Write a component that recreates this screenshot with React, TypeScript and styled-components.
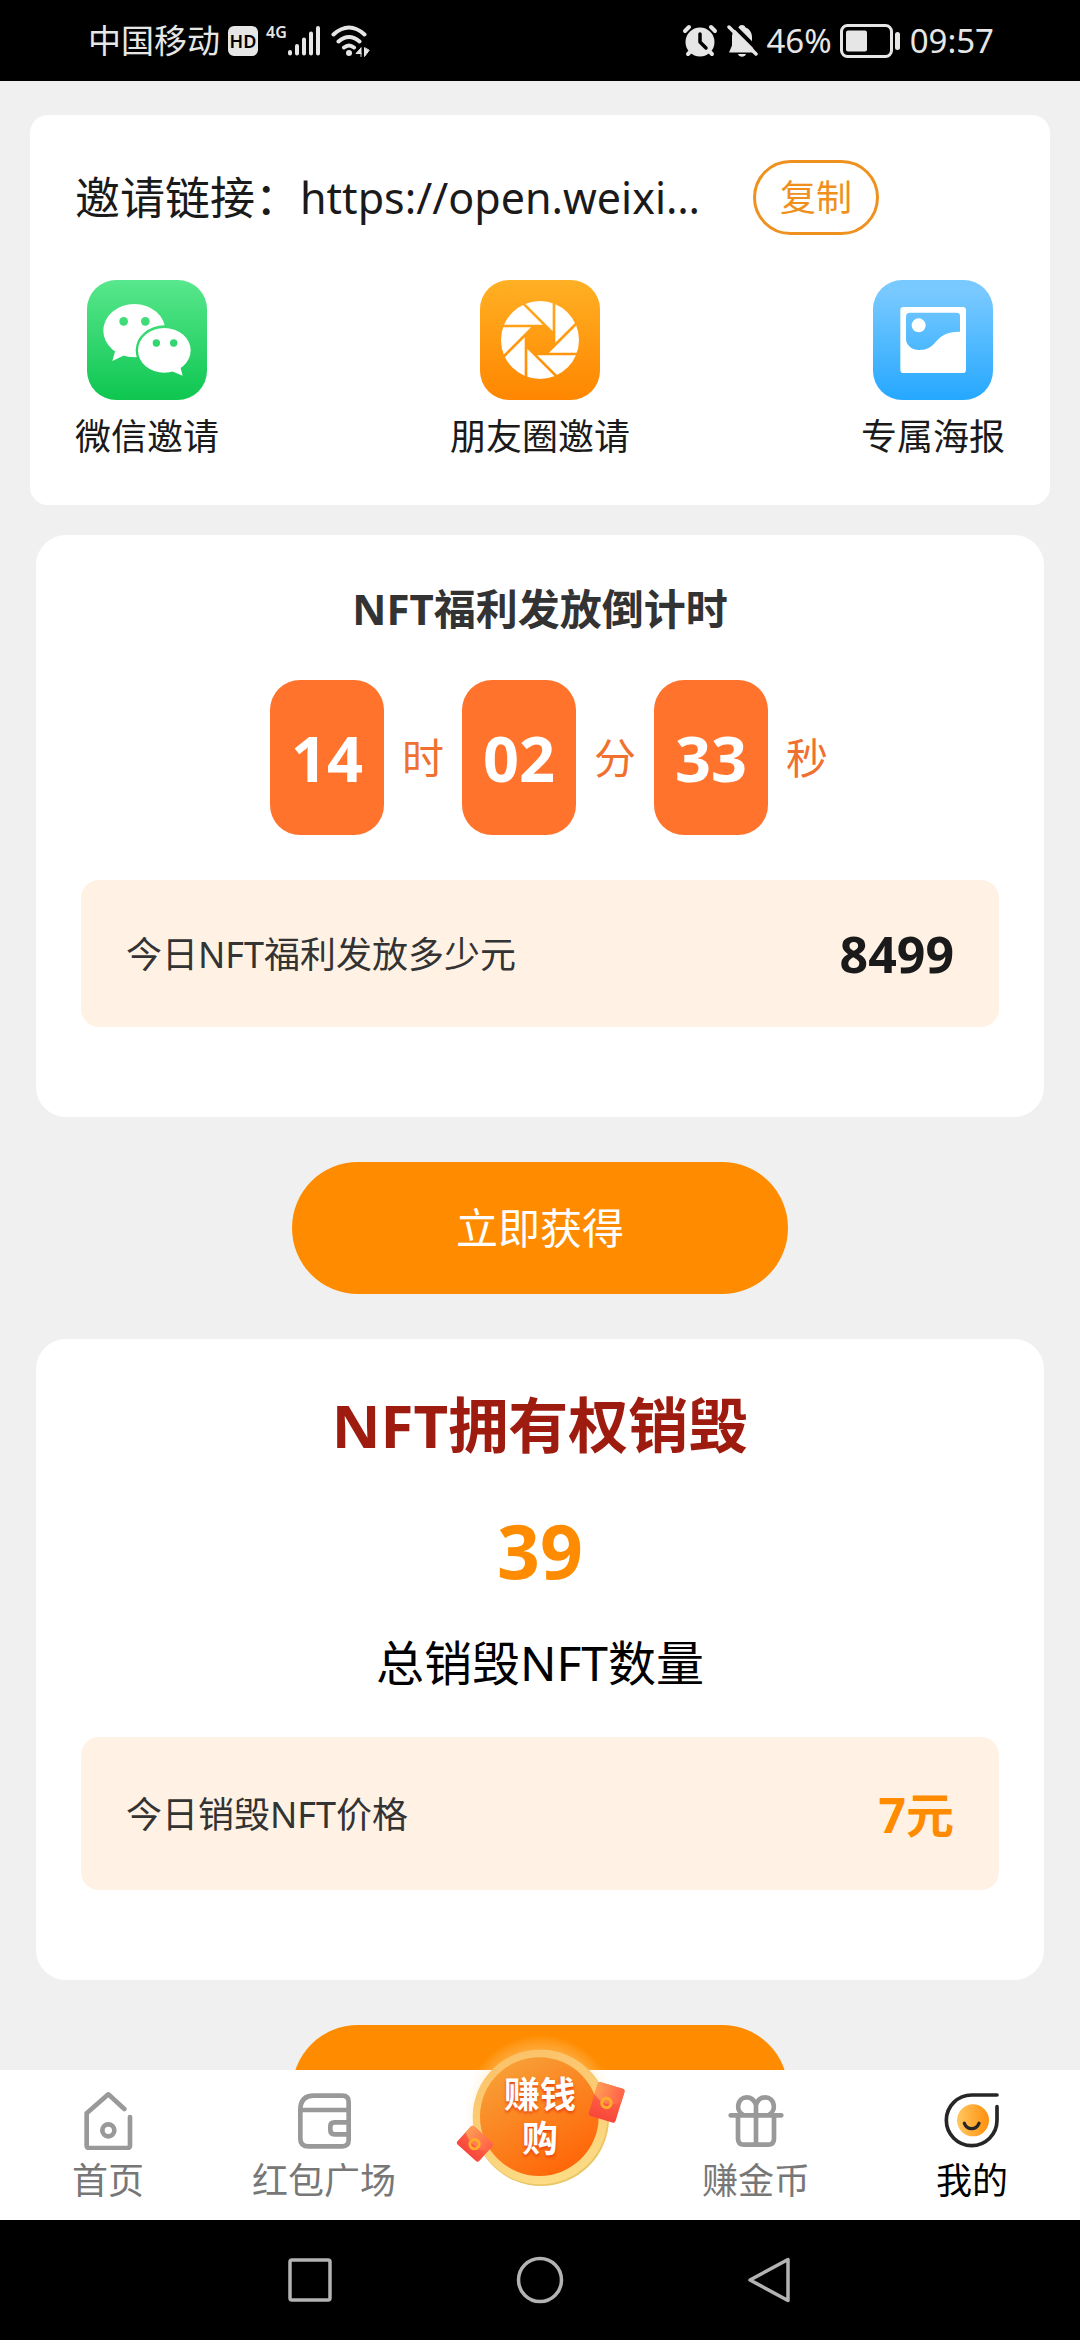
import React from "react";
import styled, { createGlobalStyle } from "styled-components";

const GlobalStyle = createGlobalStyle`
  * { box-sizing: border-box; }
  body {
    margin: 0;
    background: #f0f0f0;
    font-family: "Noto Sans", "Noto Sans CJK SC", sans-serif;
    color: #1a1a1a;
  }
  button { border: 0; padding: 0; background: none; font: inherit; color: inherit; cursor: pointer; }
  h2, p { margin: 0; }
  svg { display: block; flex: none; }
`;

const Screen = styled.div`
  display: flex;
  flex-direction: column;
  height: 100vh;
`;

/* ---------- status bar ---------- */

const StatusBar = styled.header`
  flex: none;
  display: flex;
  justify-content: space-between;
  align-items: center;
  height: 81px;
  padding: 0 86px 0 88px;
  background: #000;
  color: #e6e6e6;
  font-size: 33px;
  line-height: 48px;
`;

const StatusGroup = styled.div`
  display: flex;
  align-items: center;
  gap: 8px;
`;

const HdBadge = styled.span`
  width: 30px;
  height: 30px;
  border-radius: 6px;
  background: #e6e6e6;
  color: #000;
  font-size: 18px;
  font-weight: 600;
  line-height: 30px;
  text-align: center;
`;

const Cellular = styled.span`
  display: flex;
  align-items: flex-start;
`;

const NetworkType = styled.span`
  font-size: 16px;
  font-weight: 600;
  line-height: 16px;
`;

const Signal = () => (
  <svg width="36" height="34" viewBox="0 0 36 34" stroke="#e6e6e6" strokeWidth="4" strokeLinecap="round">
    <path d="M3 28v1.500M10 22v7.500M17 15.500v14M24 9.500v20M31 4v25.500" />
  </svg>
);

const Wifi = () => (
  <svg width="40" height="34" viewBox="0 0 40 34" fill="none" stroke="#e6e6e6" strokeWidth="4" strokeLinecap="round">
    <path d="M2.500 10.500q15.500 -14 31 0M7.500 17.500q10.500 -9 21 0M13 23.500q5 -4 10 0" />
    <circle cx="18" cy="29" r="3" fill="#e6e6e6" stroke="none" />
    <path d="M30 24v8.500M30 24l-5 5.500h5M33.500 24v8.500l4.500 -6z" fill="#e6e6e6" strokeWidth="1" />
  </svg>
);

const Alarm = () => (
  <svg width="36" height="34" viewBox="0 0 36 34">
    <g stroke="#e6e6e6" strokeWidth="4" strokeLinecap="round">
      <path d="M3 7l4 -4M33 7l-4 -4M6 30l4 -4M30 30l-4 -4" />
    </g>
    <circle cx="18" cy="18" r="14.500" fill="#e6e6e6" />
    <path d="M18 10v8l6 6" fill="none" stroke="#000" strokeWidth="3.500" strokeLinecap="round" strokeLinejoin="round" />
  </svg>
);

const MutedBell = () => (
  <svg width="32" height="34" viewBox="0 0 32 34">
    <path
      d="M16 1c2 0 3 1 3.500 2.500c5 2 6.500 6 6.500 10v8l3 7H3l3 -7v-8c0 -4 1.500 -8 6.500 -10C13 2 14 1 16 1zM12 30h8c-1 3.500 -7 3.500 -8 0z"
      fill="#e6e6e6"
    />
    <path d="M5 -1L34 28" stroke="#000" strokeWidth="4" />
    <path d="M3 3L30 30" stroke="#e6e6e6" strokeWidth="3.500" strokeLinecap="round" />
  </svg>
);

const Battery = () => (
  <svg width="62" height="34" viewBox="0 0 62 34">
    <rect x="1.500" y="1.500" width="50" height="31" rx="6" fill="none" stroke="#e6e6e6" strokeWidth="3" />
    <rect x="6" y="6.500" width="21" height="21" rx="2" fill="#e6e6e6" />
    <rect x="55" y="8" width="5" height="18" rx="2.500" fill="#e6e6e6" />
  </svg>
);

/* ---------- content ---------- */

const Content = styled.main`
  flex: 1;
  min-height: 0;
  overflow-y: auto;
  scrollbar-width: none;
  padding: 34px 36px 0;
  display: flex;
  flex-direction: column;
  align-items: stretch;
  gap: 45px;
  & > * { flex: none; }
`;

const InviteCard = styled.section`
  margin: 0 -6px -15px;
  padding: 45px 45px 41px;
  border-radius: 18px;
  background: #fff;
`;

const InviteRow = styled.div`
  display: flex;
  align-items: center;
  margin-bottom: 45px;
  font-size: 45px;
  line-height: 60px;
  white-space: nowrap;
`;

const InviteUrl = styled.span`
  width: 408px;
  margin-right: 45px;
  font-size: 43px;
`;

const CopyButton = styled.button`
  width: 126px;
  height: 75px;
  border: 3px solid #ef911f;
  border-radius: 38px;
  color: #f0901c;
  font-size: 36px;
  line-height: 54px;
`;

const ShareRow = styled.div`
  display: flex;
  justify-content: space-between;
`;

const ShareButton = styled.button`
  display: flex;
  flex-direction: column;
  align-items: center;
  gap: 10px;
  font-size: 36px;
  line-height: 54px;
`;

const Card = styled.section`
  padding: 45px 45px 90px;
  border-radius: 30px;
  background: #fff;
  text-align: center;
`;

const CountTitle = styled.h2`
  margin-bottom: 42px;
  color: #333;
  font-size: 42px;
  font-weight: 700;
  line-height: 58px;
`;

const Countdown = styled.div`
  display: flex;
  justify-content: center;
  align-items: center;
  gap: 18px;
  margin-bottom: 45px;
  padding-left: 18px;
`;

const TimeTile = styled.span`
  width: 114px;
  border-radius: 30px;
  background: #ff732c;
  color: #fff;
  font-size: 63px;
  font-weight: 700;
  line-height: 155px;
`;

const TimeUnit = styled.span`
  width: 42px;
  color: #f0712f;
  font-size: 42px;
  line-height: 60px;
`;

const InfoBox = styled.div<{ $tall?: boolean }>`
  display: flex;
  justify-content: space-between;
  align-items: center;
  padding: 46px 45px 44px;
  border-radius: 18px;
  background: #fff2e4;
  color: #333;
  font-size: 36px;
  line-height: ${(p) => (p.$tall ? 63 : 57)}px;
`;

const InfoValue = styled.strong<{ $accent?: boolean }>`
  color: ${(p) => (p.$accent ? "#ff8c00" : "#1a1a1a")};
  font-size: ${(p) => (p.$accent ? 48 : 50)}px;
  font-weight: 700;
`;

const PrimaryButton = styled.button`
  align-self: center;
  width: 496px;
  height: 132px;
  border-radius: 66px;
  background: #ff8c00;
  color: #fff;
  font-size: 42px;
  line-height: 60px;
`;

const BurnTitle = styled.h2`
  margin-bottom: 36px;
  color: #9e1b0f;
  font-size: 60px;
  font-weight: 700;
  line-height: 82px;
`;

const BurnCount = styled.p`
  margin-bottom: 32px;
  color: #ff8c00;
  font-size: 75px;
  font-weight: 700;
  line-height: 96px;
`;

const BurnCaption = styled.p`
  margin-bottom: 41px;
  color: #000;
  font-size: 48px;
  line-height: 66px;
`;

/* ---------- tab bar ---------- */

const TabBar = styled.nav`
  position: relative;
  z-index: 1;
  flex: none;
  display: grid;
  grid-template-columns: repeat(5, 1fr);
  height: 150px;
  background: #fff;
`;

const Tab = styled.button<{ $active?: boolean }>`
  display: flex;
  flex-direction: column;
  align-items: center;
  gap: 4px;
  padding-top: 20px;
  color: ${(p) => (p.$active ? "#000" : "#777")};
  font-size: 36px;
  line-height: 54px;
`;

const MedalTab = styled.button`
  position: relative;
`;

const MedalArt = styled.svg`
  position: absolute;
  top: -50px;
  left: 50%;
  margin-left: -110px;
`;

const MedalText = styled.span`
  position: absolute;
  top: 3px;
  left: 0;
  right: 0;
  display: flex;
  flex-direction: column;
  color: #fff;
  font-size: 36px;
  font-weight: 700;
  line-height: 44px;
  text-shadow: 0 2px 3px #e8420c;
`;

/* ---------- system bar ---------- */

const SystemBar = styled.footer`
  flex: none;
  display: flex;
  justify-content: center;
  align-items: center;
  gap: 182px;
  height: 120px;
  background: #000;
`;

const SystemKey = ({ label, children }: { label: string; children: React.ReactNode }) => (
  <button aria-label={label}>
    <svg width="48" height="48" viewBox="0 0 48 48" fill="none" stroke="#b3b3b3" strokeWidth="3.500" strokeLinejoin="round">
      {children}
    </svg>
  </button>
);

/* ---------- drawings ---------- */

const WeChatIcon = () => (
  <svg width="120" height="120" viewBox="0 0 360 360">
    <defs>
      <linearGradient id="wx" x1="0" y1="0" x2="0" y2="1">
        <stop offset="0" stopColor="#58e78d" />
        <stop offset="1" stopColor="#0ec650" />
      </linearGradient>
      <mask id="wxBack">
        <rect width="360" height="360" fill="#fff" />
        <circle cx="110" cy="124" r="13" />
        <circle cx="175" cy="124" r="13" />
        <ellipse cx="232" cy="211" rx="86" ry="75" />
      </mask>
      <mask id="wxFront">
        <rect width="360" height="360" fill="#fff" />
        <circle cx="208" cy="189" r="11" />
        <circle cx="260" cy="189" r="11" />
      </mask>
    </defs>
    <rect width="360" height="360" rx="88" fill="url(#wx)" />
    <g fill="#fff" mask="url(#wxBack)">
      <ellipse cx="142" cy="152" rx="93" ry="80" />
      <path d="M86 208L76 243L112 226z" />
    </g>
    <g fill="#fff" mask="url(#wxFront)">
      <ellipse cx="232" cy="211" rx="79" ry="67" />
      <path d="M255 274L287 287L279 257z" />
    </g>
  </svg>
);

const MomentsIcon = () => (
  <svg width="120" height="120" viewBox="0 0 360 360">
    <defs>
      <linearGradient id="mo" x1="0" y1="0" x2="0" y2="1">
        <stop offset="0" stopColor="#ffb024" />
        <stop offset="1" stopColor="#ff8600" />
      </linearGradient>
      <mask id="aperture">
        <circle cx="180" cy="180" r="117" fill="#fff" />
        <path d="M163 138h34l25 25v34l-25 25h-34l-25 -25v-34z" />
        {[0, 45, 90, 135, 180, 225, 270, 315].map((a) => (
          <path key={a} d="M55 138H195" stroke="#000" strokeWidth="8" transform={`rotate(${a} 180 180)`} />
        ))}
      </mask>
    </defs>
    <rect width="360" height="360" rx="88" fill="url(#mo)" />
    <rect width="360" height="360" fill="#fff" mask="url(#aperture)" />
  </svg>
);

const PosterIcon = () => (
  <svg width="120" height="120" viewBox="0 0 360 360">
    <defs>
      <linearGradient id="po" x1="0" y1="0" x2="0" y2="1">
        <stop offset="0.100" stopColor="#78c9ff" />
        <stop offset="1" stopColor="#25a8ff" />
      </linearGradient>
    </defs>
    <rect width="360" height="360" rx="88" fill="url(#po)" />
    <path
      fill="#fff"
      fillRule="evenodd"
      d="M92 81H269Q279 81 279 91V269Q279 279 269 279H92Q82 279 82 269V91Q82 81 92 81ZM111 98Q99 98 99 110V176C99 195 116 210 139 210C156 210 170 208 190 184C206 165 226 154 261 155V108Q261 98 251 98Z"
    />
    <circle cx="137" cy="136" r="21" fill="#fff" />
  </svg>
);

const TabIcon = ({ children, color = "#999" }: { children: React.ReactNode; color?: string }) => (
  <svg width="60" height="60" viewBox="0 0 180 180" fill="none" stroke={color} strokeWidth="14" strokeLinecap="round" strokeLinejoin="round">
    {children}
  </svg>
);

const Envelope = ({ transform, w, h }: { transform: string; w: number; h: number }) => (
  <g transform={transform}>
    <rect x={-w / 2} y={-h / 2} width={w} height={h} rx="8" fill="url(#env)" />
    <path d={`M${-w / 2} ${-h / 2 + 8}q0 -8 8 -8h${w - 16}q8 0 8 8v${h * 0.3}q${-w / 2} ${h * 0.34} ${-w} 0z`} fill="url(#flap)" />
    <circle cy="2" r="14" fill="none" stroke="#ffad2b" strokeWidth="9" />
  </g>
);

const Medal = () => (
  <MedalArt width="220" height="200" viewBox="0 0 660 600">
    <defs>
      <radialGradient id="glow">
        <stop offset="0.750" stopColor="#ffd890" stopOpacity="0.450" />
        <stop offset="1" stopColor="#ffe9c0" stopOpacity="0" />
      </radialGradient>
      <linearGradient id="ring" x1="0.300" y1="0" x2="0.600" y2="1">
        <stop offset="0" stopColor="#fbc168" />
        <stop offset="1" stopColor="#fbdc85" />
      </linearGradient>
      <linearGradient id="face" x1="0.100" y1="0" x2="0.700" y2="1">
        <stop offset="0" stopColor="#f7a43a" />
        <stop offset="1" stopColor="#ff6508" />
      </linearGradient>
      <linearGradient id="env" x1="0" y1="0" x2="0" y2="1">
        <stop offset="0" stopColor="#ff7048" />
        <stop offset="1" stopColor="#f8463c" />
      </linearGradient>
      <linearGradient id="flap" x1="0" y1="0" x2="1" y2="0">
        <stop offset="0" stopColor="#ff9c55" />
        <stop offset="1" stopColor="#ff6148" />
      </linearGradient>
    </defs>
    <circle cx="331" cy="270" r="225" fill="url(#glow)" />
    <circle cx="333" cy="294" r="204" fill="#eac766" />
    <circle cx="330" cy="291" r="202" fill="url(#ring)" />
    <circle cx="328" cy="290" r="178" fill="url(#face)" />
    <Envelope transform="translate(530 247) rotate(17)" w={84} h={106} />
    <Envelope transform="translate(135 371) rotate(42)" w={88} h={74} />
  </MedalArt>
);

const shares = [
  { label: "微信邀请", icon: <WeChatIcon /> },
  { label: "朋友圈邀请", icon: <MomentsIcon /> },
  { label: "专属海报", icon: <PosterIcon /> },
];

const countdown = [
  ["14", "时"],
  ["02", "分"],
  ["33", "秒"],
];

export default function App() {
  return (
    <Screen>
      <GlobalStyle />
      <StatusBar>
        <StatusGroup>
          <span>中国移动</span>
          <HdBadge>HD</HdBadge>
          <Cellular>
            <NetworkType>4G</NetworkType>
            <Signal />
          </Cellular>
          <Wifi />
        </StatusGroup>
        <StatusGroup>
          <Alarm />
          <MutedBell />
          <span>46%</span>
          <Battery />
          <span>09:57</span>
        </StatusGroup>
      </StatusBar>

      <Content>
        <InviteCard>
          <InviteRow>
            <span>邀请链接：</span>
            <InviteUrl>https://open.weixi…</InviteUrl>
            <CopyButton>复制</CopyButton>
          </InviteRow>
          <ShareRow>
            {shares.map((s) => (
              <ShareButton key={s.label}>
                {s.icon}
                <span>{s.label}</span>
              </ShareButton>
            ))}
          </ShareRow>
        </InviteCard>

        <Card>
          <CountTitle>NFT福利发放倒计时</CountTitle>
          <Countdown>
            {countdown.map(([value, unit]) => (
              <React.Fragment key={unit}>
                <TimeTile>{value}</TimeTile>
                <TimeUnit>{unit}</TimeUnit>
              </React.Fragment>
            ))}
          </Countdown>
          <InfoBox>
            <span>今日NFT福利发放多少元</span>
            <InfoValue>8499</InfoValue>
          </InfoBox>
        </Card>

        <PrimaryButton>立即获得</PrimaryButton>

        <Card>
          <BurnTitle>NFT拥有权销毁</BurnTitle>
          <BurnCount>39</BurnCount>
          <BurnCaption>总销毁NFT数量</BurnCaption>
          <InfoBox $tall>
            <span>今日销毁NFT价格</span>
            <InfoValue $accent>7元</InfoValue>
          </InfoBox>
        </Card>

        <PrimaryButton aria-label="更多" />
      </Content>

      <TabBar>
        <Tab>
          <TabIcon>
            <path d="M139 57L91 13L26 70V166Q26 174 34 174H148Q156 174 156 166V81" />
            <circle cx="91" cy="121" r="18" />
          </TabIcon>
          <span>首页</span>
        </Tab>
        <Tab>
          <TabIcon>
            <path d="M60 17H145Q164 17 164 36V150Q164 169 145 169H44Q19 169 19 146V60Q19 17 60 17ZM22 60H164M162 97H122Q109 97 109 109V120Q109 133 122 133H162" />
          </TabIcon>
          <span>红包广场</span>
        </Tab>
        <MedalTab>
          <Medal />
          <MedalText>
            <span>赚钱</span>
            <span>购</span>
          </MedalText>
        </MedalTab>
        <Tab>
          <TabIcon>
            <path d="M14 76H166M36 76V146Q36 164 54 164H126Q144 164 144 146V76M90 48V162" />
            <path d="M50 74C28 62 34 22 62 22Q82 22 90 44Q98 22 118 22C146 22 152 62 130 74" />
          </TabIcon>
          <span>赚金币</span>
        </Tab>
        <Tab $active>
          <TabIcon color="#262626">
            <defs>
              <linearGradient id="yolk">
                <stop offset="0" stopColor="#ffc860" />
                <stop offset="1" stopColor="#ff8f0c" />
              </linearGradient>
            </defs>
            <path d="M165 15H89A76 76 0 1 0 165 91V50" strokeWidth="11" />
            <circle cx="93" cy="91" r="48" fill="url(#yolk)" stroke="none" />
            <path d="M67 100Q74 116 89 116Q104 116 111 100" strokeWidth="10" />
          </TabIcon>
          <span>我的</span>
        </Tab>
      </TabBar>

      <SystemBar>
        <SystemKey label="最近任务">
          <rect x="4" y="4" width="40" height="40" rx="2" />
        </SystemKey>
        <SystemKey label="主屏幕">
          <circle cx="24" cy="24" r="21.500" />
        </SystemKey>
        <SystemKey label="返回">
          <path d="M42 3.500V44.500L4 24Z" />
        </SystemKey>
      </SystemBar>
    </Screen>
  );
}
